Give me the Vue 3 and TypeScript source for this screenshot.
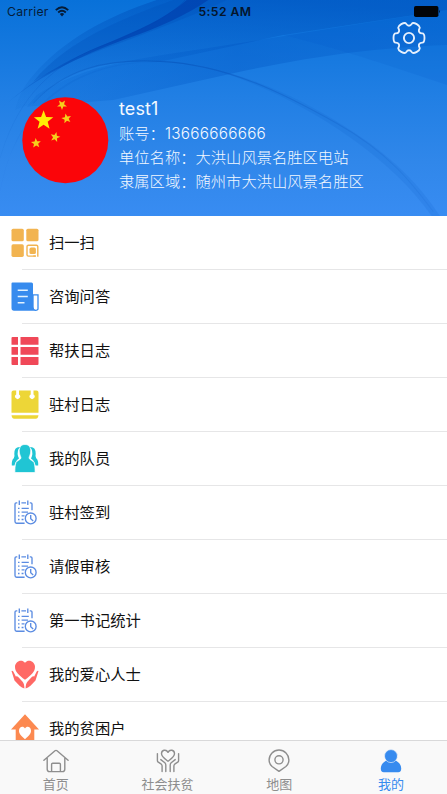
<script setup lang="ts">
type IconName = 'scan' | 'news' | 'table' | 'calendar' | 'team' | 'clock' | 'love' | 'house'

interface MenuItem {
  label: string
  icon: IconName
}

interface Tab {
  label: string
  icon: 'home' | 'hands' | 'pin' | 'user'
  active?: boolean
}

const menu: MenuItem[] = [
  { label: '扫一扫', icon: 'scan' },
  { label: '咨询问答', icon: 'news' },
  { label: '帮扶日志', icon: 'table' },
  { label: '驻村日志', icon: 'calendar' },
  { label: '我的队员', icon: 'team' },
  { label: '驻村签到', icon: 'clock' },
  { label: '请假审核', icon: 'clock' },
  { label: '第一书记统计', icon: 'clock' },
  { label: '我的爱心人士', icon: 'love' },
  { label: '我的贫困户', icon: 'house' },
]

const tabs: Tab[] = [
  { label: '首页', icon: 'home' },
  { label: '社会扶贫', icon: 'hands' },
  { label: '地图', icon: 'pin' },
  { label: '我的', icon: 'user', active: true },
]

const account = { label: '账号：', value: '13666666666' }

const details: string[] = [
  '单位名称：大洪山风景名胜区电站',
  '隶属区域：随州市大洪山风景名胜区',
]

// Six-toothed gear outline, smoothed by curves through the segment midpoints
function gearPath(): string {
  const pts: [number, number][] = []
  for (let i = 0; i < 6; i++) {
    for (const [r, a] of [[12.3, -22], [16.6, -16], [16.6, 16], [12.3, 22]]) {
      const t = ((i * 60 + a) * Math.PI) / 180
      pts.push([r * Math.cos(t), r * Math.sin(t)])
    }
  }
  const mid = (a: [number, number], b: [number, number]) =>
    `${((a[0] + b[0]) / 2).toFixed(2)} ${((a[1] + b[1]) / 2).toFixed(2)}`
  let d = `M${mid(pts[pts.length - 1], pts[0])}`
  pts.forEach((p, i) => {
    d += `Q${p[0].toFixed(2)} ${p[1].toFixed(2)} ${mid(p, pts[(i + 1) % pts.length])}`
  })
  return d + 'Z'
}

function star(cx: number, cy: number, r: number, rot: number): string {
  const out: string[] = []
  for (let i = 0; i < 10; i++) {
    const rad = i % 2 ? r * 0.42 : r
    const t = ((i * 36 - 90 + rot) * Math.PI) / 180
    out.push(`${(cx + rad * Math.cos(t)).toFixed(2)},${(cy + rad * Math.sin(t)).toFixed(2)}`)
  }
  return out.join(' ')
}

const gear = gearPath()
const stars: string[] = [
  star(21.6, 23.4, 10.2, 0),
  star(40, 7.8, 5.2, 36),
  star(44.5, 21.6, 5.2, -12),
  star(33.2, 40.1, 5.2, 14),
  star(14, 46.2, 5.2, -4),
]
</script>

<template>
  <div class="screen">
    <header class="hero">
      <svg class="waves" viewBox="0 0 1341 648" preserveAspectRatio="none" aria-hidden="true">
        <defs>
          <linearGradient id="sky" x1="0" y1="0" x2="0" y2="1">
            <stop offset="0" stop-color="#0871d9" />
            <stop offset="0.45" stop-color="#217fe4" />
            <stop offset="0.75" stop-color="#3087ea" />
            <stop offset="1" stop-color="#388cf2" />
          </linearGradient>
          <linearGradient id="shade" x1="0.6" y1="0" x2="0.35" y2="1">
            <stop offset="0" stop-color="#0051bd" stop-opacity="0.6" />
            <stop offset="1" stop-color="#0560c8" stop-opacity="0.08" />
          </linearGradient>
          <linearGradient id="band" x1="0" y1="0" x2="1" y2="0">
            <stop offset="0" stop-color="#005fcc" stop-opacity="0.16" />
            <stop offset="0.5" stop-color="#0055c3" stop-opacity="0.36" />
            <stop offset="1" stop-color="#0055c3" stop-opacity="0.24" />
          </linearGradient>
          <linearGradient id="crease" x1="0" y1="1" x2="1" y2="0">
            <stop offset="0" stop-color="#0054c0" stop-opacity="0.15" />
            <stop offset="0.6" stop-color="#0043b2" stop-opacity="0.75" />
            <stop offset="1" stop-color="#0042b0" stop-opacity="0.8" />
          </linearGradient>
          <linearGradient id="arc" x1="0" y1="0" x2="1" y2="0">
            <stop offset="0" stop-color="#0756bd" stop-opacity="0.2" />
            <stop offset="0.35" stop-color="#0756bd" stop-opacity="0.65" />
            <stop offset="1" stop-color="#1765cd" stop-opacity="0.15" />
          </linearGradient>
        </defs>
        <rect width="1341" height="648" fill="url(#sky)" />
        <path fill="url(#shade)" d="M470 0C320 50 190 120 100 225C70 260 55 290 45 330L100 310C180 225 300 175 480 185L850 105L1341 30V0Z" />
        <path fill="url(#band)" d="M110 285C260 190 430 175 620 145L1341 30V135C1120 145 960 165 720 215L340 300L80 320Z" />
        <path fill="#0054c2" fill-opacity="0.12" d="M850 105C1050 155 1190 205 1341 255V30Z" />
        <path fill="#004fbb" fill-opacity="0.3" d="M100 245C200 120 380 50 520 0H680C560 55 450 95 350 133C240 170 150 215 100 245Z" />
        <path fill="url(#crease)" d="M0 330C130 205 260 155 360 113C450 76 510 42 560 0H625C560 44 480 82 375 118C240 168 100 235 0 330Z" />
        <path fill="none" stroke="url(#crease)" stroke-width="3" d="M0 475C45 320 130 205 300 140C430 90 510 50 555 0" opacity=".35" />
        <path fill="#0050bd" fill-opacity="0.11" d="M0 580C45 330 200 180 480 185C720 195 940 310 1110 430C1230 520 1280 590 1320 648H1295C1130 410 760 220 550 190C200 155 35 360 0 580Z" />
        <path fill="none" stroke="url(#arc)" stroke-width="3.5" d="M100 310C190 210 310 175 480 184C680 193 850 280 1010 370C1170 460 1240 555 1300 635" />
      </svg>

      <div class="status">
        <div class="carrier">
          <span>Carrier</span>
          <svg width="14" height="11" viewBox="0 0 14 11" fill="none" stroke="#051c38" stroke-width="1.9">
            <path d="M.8 4.1Q7-1.8 13.2 4.1M3.2 6.5Q7 3 10.8 6.5" />
            <path d="M4.8 8Q7 6.2 9.2 8L7 10.5Z" fill="#051c38" stroke="none" />
          </svg>
        </div>
        <div class="time">5:52 AM</div>
        <svg class="battery" width="27" height="11" viewBox="0 0 27 11">
          <rect width="24.4" height="11" rx="1.8" fill="#020407" />
          <path d="M25.2 3.7q1.5 1.8 0 3.6z" fill="#020407" />
        </svg>
      </div>

      <div class="toolbar">
        <svg width="34" height="34" viewBox="-17 -17 34 34" fill="none" stroke="#e6f0fd" stroke-width="1.9">
          <path :d="gear" transform="scale(.97 1)" />
          <circle r="5.1" />
        </svg>
      </div>

      <div class="profile">
        <svg class="avatar" width="87" height="87" viewBox="0 0 87 87">
          <circle cx="43.3" cy="43.3" r="43" fill="#fb0509" />
          <polygon v-for="(s, i) in stars" :key="i" :points="s" :fill="i ? '#f6cf1c' : '#ffee05'" />
        </svg>
        <div class="info">
          <div class="name">test1</div>
          <div class="line">{{ account.label }}<span class="number">{{ account.value }}</span></div>
          <div v-for="line in details" :key="line" class="line">{{ line }}</div>
        </div>
      </div>
    </header>

    <main class="list">
      <div v-for="item in menu" :key="item.label" class="row">
        <svg class="icon" width="28" height="30" viewBox="0 0 28 30">
          <g v-if="item.icon === 'scan'" fill="#f2b450">
            <rect x=".5" y=".7" width="12.3" height="12.6" rx="1.6" />
            <rect x="15.3" y=".7" width="12.2" height="12.6" rx="1.6" />
            <rect x=".5" y="16.3" width="12.3" height="12.6" rx="1.6" />
            <path d="M22.8 28.1H17.4Q16 28.1 16 26.7V18.6Q16 17.2 17.4 17.2H25.4Q26.8 17.2 26.8 18.6V28.7" fill="none" stroke="#f2b450" stroke-width="1.4" />
            <rect x="18.5" y="19.6" width="6.4" height="6.4" rx="1.6" />
            <rect x="22.3" y="27.2" width="2.6" height="1.7" />
          </g>
          <g v-else-if="item.icon === 'news'">
            <path d="M1.5.5H20.5Q22 .5 22 2V25.5Q22 28.8 24 28.8H3Q.5 28.8.5 26V1.5Q.5.5 1.5.5Z" fill="#378bee" />
            <path d="M22 12.8H27V26.8Q27 28.3 24.5 28.3Q22 28.3 22 25Z" fill="#fff" stroke="#378bee" stroke-width="1.3" />
            <path d="M6.7 8.3H16.8M6.7 14.5H16.8M6.7 20.8H13.5" stroke="#e2f2ff" stroke-width="1.6" />
          </g>
          <g v-else-if="item.icon === 'table'" fill="#f04858">
            <path d="M1.5 1H7V8.8H.5V2Q.5 1 1.5 1ZM9.5 1H26.5Q27.5 1 27.5 2V8.8H9.5ZM.5 11H7V18.7H.5ZM9.5 11H27.5V18.7H9.5ZM.5 21H7V29H1.5Q.5 29 .5 28ZM9.5 21H27.5V28Q27.5 29 26.5 29H9.5Z" />
          </g>
          <g v-else-if="item.icon === 'calendar'" fill="#edd637">
            <path d="M2.5.5H5.2V4.4A2.5 2.5 0 1 0 8 4.4V.5H19.7V4.4A2.5 2.5 0 1 0 22.5 4.4V.5H25.5Q27.5.5 27.5 2.5V22.8H.5V2.5Q.5.5 2.5.5Z" />
            <path d="M.5 25.3H27.5Q27 28.8 24.8 28.8H3.2Q1 28.8.5 25.3Z" />
          </g>
          <g v-else-if="item.icon === 'team'" fill="#20c5d4">
            <path d="M10 3Q3 2 3.3 10Q4 12.5 2.8 14.3Q.5 16 .8 21.5H3.5Q4.5 16.5 8 14.5Q5.5 10 7.5 5ZM18 3Q25 2 24.7 10Q24 12.5 25.2 14.3Q27.5 16 27.2 21.5H24.5Q23.5 16.5 20 14.5Q22.5 10 20.5 5Z" />
            <path d="M14 .5C18.5.5 20 4 19.7 8C19.4 11 18.2 12.2 18 14C18.5 16 22 16.5 23 18.5C24 21 24.1 25 24.1 28.5H3.9C3.9 25 4 21 5 18.5C6 16.5 9.5 16 10 14C9.8 12.2 8.6 11 8.3 8C8 4 9.5.5 14 .5Z" stroke="#fff" stroke-width=".7" />
          </g>
          <g v-else-if="item.icon === 'clock'" fill="none" stroke="#5b8ce2" stroke-width="1.35">
            <path d="M6.3 4.8H5.2Q4 4.8 4 6V23.6Q4 25.2 5.6 25.2H13.6M10.4 4.8H15M18.8 4.8H19.8Q21 4.8 21 6V12.3M8.3 2.5V7M16.8 2.5V7M7 10.4H8.5M10.6 10.4H17.8M7 14.1H8.5M10.6 14.1H17M7 17.8H8.5M10.6 17.8H13.5M7 21.5H8.5M10.6 21.5H12.5" />
            <circle cx="19.7" cy="20.4" r="5.4" />
            <path d="M19.7 17V20.8L22.2 23" />
          </g>
          <g v-else-if="item.icon === 'love'" fill="#ff6965">
            <path d="M14 19.8C8 15.2 4 12 4 6.7C4 1.7 10.5-1.8 14 2.8C17.5-1.8 24 1.7 24 6.7C24 12 20 15.2 14 19.8Z" />
            <path d="M.5 11Q2 10.3 2.8 12.5L4.8 16.6Q6 15.8 7.2 17L11.4 21.4Q13.4 23.5 13.4 28.5Q11 28 8.5 25.7L3.5 20.5ZM27.5 11Q26 10.3 25.2 12.5L23.2 16.6Q22 15.8 20.8 17L16.6 21.4Q14.6 23.5 14.6 28.5Q17 28 19.5 25.7L24.5 20.5Z" />
          </g>
          <g v-else>
            <path d="M14 .2L28 15.5H23.3V30H4.7V15.5H0Z" fill="#fc8950" />
            <path d="M14 25.2C10.5 22 8 20.3 8 16.8C8 12.7 12.3 11.4 14 14.5C15.7 11.4 20 12.7 20 16.8C20 20.3 17.5 22 14 25.2Z" fill="#fff" />
          </g>
        </svg>
        <span class="label">{{ item.label }}</span>
      </div>
    </main>

    <nav class="tabbar">
      <div v-for="tab in tabs" :key="tab.label" class="tab" :class="{ active: tab.active }">
        <svg width="26" height="25" viewBox="0 0 26 25" fill="none" stroke="currentColor" stroke-width="1.4" stroke-linejoin="round" stroke-linecap="round">
          <g v-if="tab.icon === 'home'">
            <path d="M.9 11.2L12 1.7Q13 1 14 1.7L25.1 11.2M4.2 9V20.2Q4.2 22.6 6.6 22.6H19.4Q21.8 22.6 21.8 20.2V9M8.6 22.3V15.3Q8.6 14.2 9.7 14.2H16.3Q17.4 14.2 17.4 15.3V22.3" />
          </g>
          <g v-else-if="tab.icon === 'hands'">
            <path d="M13 12.2C9.3 9.4 6.5 7.6 6.5 4.7C6.5.9 11.2-.1 13 3.3C14.8-.1 19.5.9 19.5 4.7C19.5 7.6 16.7 9.4 13 12.2Z" />
            <path d="M2.4 4.6V11.4Q2.4 12.6 3.3 13.2L6.3 15.2Q7.1 15.8 7.1 17V22.5M5.8 10.6L9.8 13.8Q10.8 14.6 10.8 16V22.5M23.6 4.6V11.4Q23.6 12.6 22.7 13.2L19.7 15.2Q18.9 15.8 18.9 17V22.5M20.2 10.6L16.2 13.8Q15.2 14.6 15.2 16V22.5" />
          </g>
          <g v-else-if="tab.icon === 'pin'">
            <path d="M13 22.4L6.1 17.5Q3.1 14.9 3.1 10.9A9.9 9.9 0 0 1 22.9 10.9Q22.9 14.9 19.9 17.5Z" />
            <circle cx="13" cy="10.8" r="4.1" />
          </g>
          <g v-else fill="currentColor" stroke="none">
            <path d="M8.2 11.5H17.8Q23.2 14.5 23.2 19.5Q23.2 23.3 20.3 23.3H5.7Q2.8 23.3 2.8 19.5Q2.8 14.5 8.2 11.5Z" />
            <circle cx="13" cy="7.1" r="6.5" stroke="#f9f9f9" stroke-width=".6" />
          </g>
        </svg>
        <span>{{ tab.label }}</span>
      </div>
    </nav>
  </div>
</template>

<style>
body {
  margin: 0;
  overflow: hidden;
}
</style>

<style scoped>
.screen {
  display: flex;
  flex-direction: column;
  width: 447px;
  height: 794px;
  overflow: hidden;
  background: #fff;
  font-family: Inter, "Noto Sans CJK SC", sans-serif;
}

.hero {
  position: relative;
  flex: none;
  height: 216px;
  box-sizing: border-box;
  overflow: hidden;
}

.waves {
  position: absolute;
  inset: 0;
  width: 100%;
  height: 100%;
}

.status {
  position: relative;
  display: grid;
  grid-template-columns: 1fr auto 1fr;
  align-items: center;
  height: 22px;
  padding: 0 6px 0 7px;
  color: #051c38;
  font-size: 12.2px;
  line-height: 22px;
}

.carrier {
  display: flex;
  align-items: center;
  gap: 6px;
  letter-spacing: 0.25px;
}

.carrier span {
  padding-top: 1px;
}

.time {
  padding: 1px 0 0 2px;
  color: #04152b;
  font-weight: 600;
  letter-spacing: 0.45px;
}

.battery {
  justify-self: end;
}

.toolbar {
  position: relative;
  display: flex;
  justify-content: flex-end;
  height: 34px;
  padding: 0 21px 0 0;
}

.toolbar svg {
  margin-top: -1px;
}

.profile {
  position: relative;
  display: flex;
  gap: 10.5px;
  padding: 41px 0 0 21.5px;
}

.avatar {
  flex: none;
  margin-top: 0.4px;
}

.info {
  color: #f3f8ff;
  white-space: nowrap;
}

.name {
  height: 25px;
  padding-top: 1px;
  box-sizing: border-box;
  font-size: 18px;
  letter-spacing: 0.1px;
  line-height: 22px;
}

.line {
  font-size: 15.3px;
  font-weight: 300;
  line-height: 23.8px;
}

.number {
  letter-spacing: 0.28px;
}

.list {
  flex: 1;
  min-height: 0;
  overflow: hidden;
}

.row {
  display: flex;
  align-items: center;
  height: 54px;
  box-sizing: border-box;
  padding-left: 11px;
  background: linear-gradient(#e6e6e7, #e6e6e7) 22px 53px / 100% 1px no-repeat;
}

.icon {
  flex: none;
  margin-right: 10px;
}

.label {
  color: #111;
  font-size: 15.3px;
  line-height: 24px;
}

.tabbar {
  display: grid;
  grid-template-columns: repeat(4, 1fr);
  flex: none;
  height: 54px;
  box-sizing: border-box;
  border-top: 1px solid #d9d9da;
  background: #f9f9f9;
}

.tab {
  display: flex;
  flex-direction: column;
  align-items: center;
  padding-top: 8px;
  color: #8e8e8e;
  font-size: 13px;
  line-height: 18px;
}

.tab span {
  margin-top: 1px;
}

.active {
  color: #378bef;
}
</style>
